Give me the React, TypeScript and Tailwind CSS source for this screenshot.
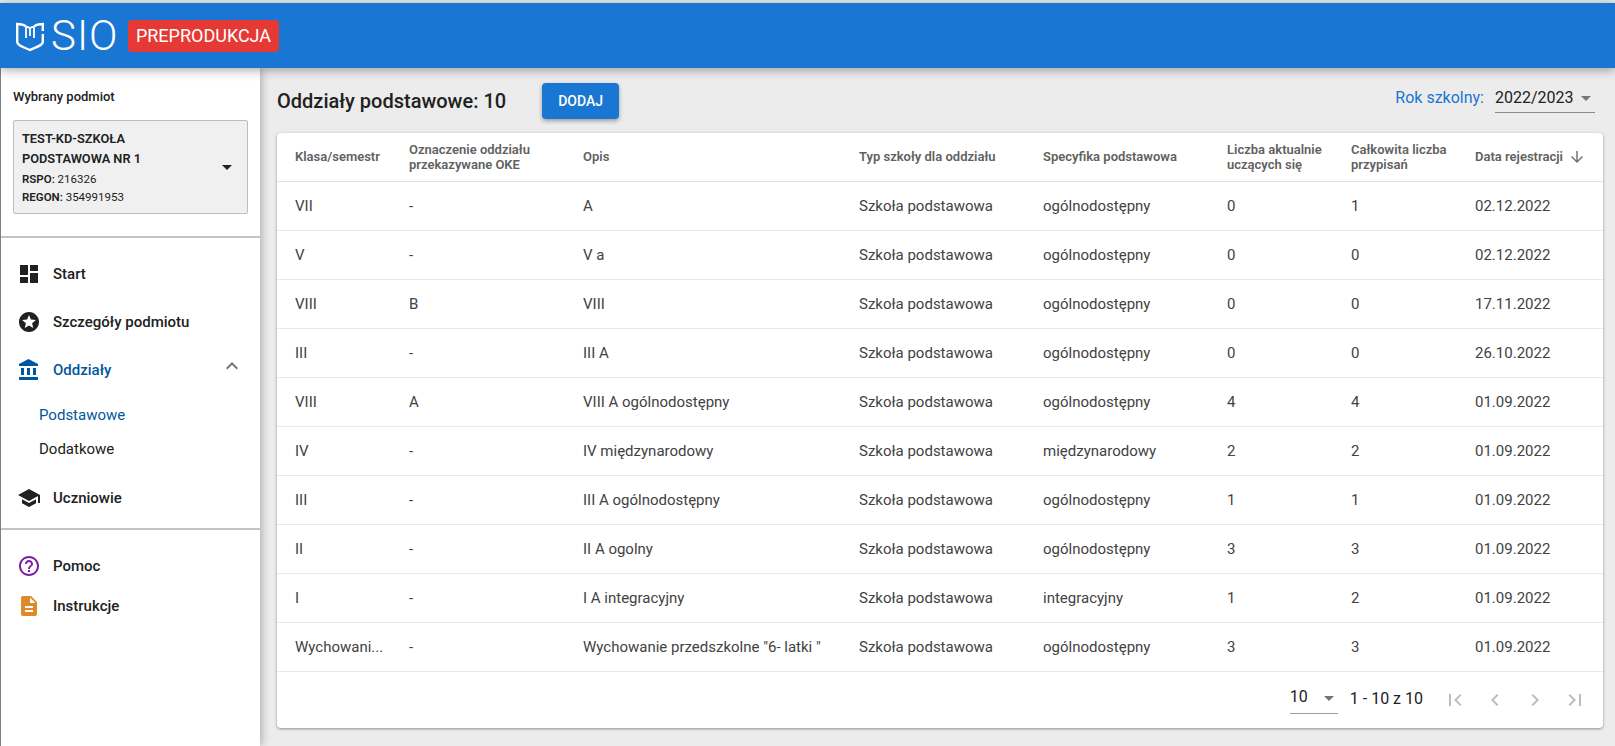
const FONT = 'font-["Roboto",sans-serif]';

const ICONS = {
  dashboard: 'M3 13h8V3H3v10zm0 8h8v-6H3v6zm10 0h8V11h-8v10zm0-18v6h8V3h-8z',
  stars: 'M11.99 2C6.47 2 2 6.48 2 12s4.47 10 9.99 10C17.52 22 22 17.52 22 12S17.52 2 11.99 2zm4.24 16L12 15.45 7.77 18l1.12-4.81-3.73-3.23 4.92-.42L12 5l1.92 4.53 4.92.42-3.73 3.23L16.23 18z',
  bank: 'M4 10v7h3v-7H4zm6 0v7h3v-7h-3zM2 22h19v-3H2v3zm14-12v7h3v-7h-3zm-4.5-9L2 6v2h19V6l-9.5-5z',
  school: 'M5 13.18v4L12 21l7-3.82v-4L12 17l-7-3.82zM12 3L1 9l11 6 9-4.91V17h2V9L12 3z',
  help: 'M11 18h2v-2h-2v2zm1-16C6.48 2 2 6.48 2 12s4.48 10 10 10 10-4.48 10-10S17.52 2 12 2zm0 18c-4.41 0-8-3.59-8-8s3.59-8 8-8 8 3.59 8 8-3.59 8-8 8zm0-14c-2.21 0-4 1.79-4 4h2c0-1.1.9-2 2-2s2 .9 2 2c0 2-3 1.75-3 5h2c0-2.25 3-2.5 3-5 0-2.21-1.79-4-4-4z',
  description: 'M14 2H6c-1.1 0-1.99.9-1.99 2L4 20c0 1.1.89 2 1.99 2H18c1.1 0 2-.9 2-2V8l-6-6zm2 16H8v-2h8v2zm0-4H8v-2h8v2zm-3-5V3.5L18.5 9H13z',
  first: 'M18.41 16.59L13.82 12l4.59-4.59L17 6l-6 6 6 6zM6 6h2v12H6z',
  prev: 'M15.41 7.41L14 6l-6 6 6 6 1.41-1.41L10.83 12z',
  next: 'M10 6L8.59 7.41 13.17 12l-4.58 4.59L10 18l6-6z',
  last: 'M5.59 7.41L10.18 12l-4.59 4.59L7 18l6-6-6-6zM16 6h2v12h-2z',
  less: 'M12 8l-6 6 1.41 1.41L12 10.83l4.59 4.58L18 14z',
  arrowDown: 'M20 12l-1.41-1.41L13 16.17V4h-2v12.17l-5.58-5.59L4 12l8 8 8-8z',
  dropDown: 'M7 10l5 5 5-5z',
};

function Icon({ name, className }: { name: keyof typeof ICONS; className: string }) {
  return (
    <svg viewBox="0 0 24 24" fill="currentColor" className={className}>
      <path d={ICONS[name]} />
    </svg>
  );
}

const rows = [
  ['VII', '-', 'A', 'Szkoła podstawowa', 'ogólnodostępny', '0', '1', '02.12.2022'],
  ['V', '-', 'V a', 'Szkoła podstawowa', 'ogólnodostępny', '0', '0', '02.12.2022'],
  ['VIII', 'B', 'VIII', 'Szkoła podstawowa', 'ogólnodostępny', '0', '0', '17.11.2022'],
  ['III', '-', 'III A', 'Szkoła podstawowa', 'ogólnodostępny', '0', '0', '26.10.2022'],
  ['VIII', 'A', 'VIII A ogólnodostępny', 'Szkoła podstawowa', 'ogólnodostępny', '4', '4', '01.09.2022'],
  ['IV', '-', 'IV międzynarodowy', 'Szkoła podstawowa', 'międzynarodowy', '2', '2', '01.09.2022'],
  ['III', '-', 'III A ogólnodostępny', 'Szkoła podstawowa', 'ogólnodostępny', '1', '1', '01.09.2022'],
  ['II', '-', 'II A ogolny', 'Szkoła podstawowa', 'ogólnodostępny', '3', '3', '01.09.2022'],
  ['I', '-', 'I A integracyjny', 'Szkoła podstawowa', 'integracyjny', '1', '2', '01.09.2022'],
  ['Wychowani...', '-', 'Wychowanie przedszkolne "6- latki "', 'Szkoła podstawowa', 'ogólnodostępny', '3', '3', '01.09.2022'],
];

function Logo() {
  return (
    <svg viewBox="0 0 28 30" fill="none" stroke="white" strokeWidth="2.4" className="w-[28px] h-[30px] shrink-0">
      <path d="M1.2 3 V21 C1.2 24.5 7.5 26 13.8 29 C20 26 26.8 24.5 26.8 21 V13" />
      <path d="M0 3 C4 3 8 3.2 10 5.5 M18 5.5 C20 3.2 24 3 28 3 M26.8 3 V10" />
      <path d="M10 17 V6.5 C11.5 5.5 13.4 6 14 8 C14.6 6 16.5 5.5 18 6.5 V17 M14 8 V15" strokeWidth="1.8" />
    </svg>
  );
}

function NavItem({ icon, label, iconClass, labelClass }: { icon: keyof typeof ICONS; label: string; iconClass: string; labelClass: string }) {
  return (
    <div className="flex items-center pl-[16px] h-[24px]">
      <Icon name={icon} className={'w-6 h-6 shrink-0 ' + iconClass} />
      <span className={'ml-[12px] text-[15px] font-medium ' + labelClass}>{label}</span>
    </div>
  );
}

export default function App() {
  return (
    <div className={'h-[746px] w-[1615px] overflow-hidden flex flex-col bg-[#ececec] ' + FONT}>
      <div className="h-[3px] bg-[#e6ece8] shrink-0" />
      <header className="relative z-20 h-[65px] shrink-0 bg-[#1976d2] flex items-center pl-4 shadow-[0_2px_10px_rgba(0,0,0,0.35)]">
        <Logo />
        <span className="ml-[7px] w-[77px] text-white text-[42px] font-light leading-none tracking-[1px]">SIO</span>
        <span className="w-[151px] h-[32px] justify-center rounded-[4px] bg-[#e53935] text-white text-[18px] flex items-center">PREPRODUKCJA</span>
      </header>

      <div className="flex flex-1 min-h-0">
        <aside className="relative z-10 w-[260px] shrink-0 bg-white border-l border-[#808080] shadow-[2px_0_8px_rgba(0,0,0,0.25)] flex flex-col">
          <div className="h-[170px] shrink-0 border-b-2 border-[#c4c4c4] px-[12px] pt-[21px]">
            <div className="text-[13px] font-medium text-[#212121] leading-[16px]">Wybrany podmiot</div>
            <div className="mt-[15px] h-[94px] border border-[#bdbdbd] rounded-[2px] bg-[#f0f0f0] pl-[8px] pr-[8px] flex items-center justify-between">
              <div className="text-[#212121]">
                <div className="text-[12.8px] font-semibold leading-[20px]">TEST-KD-SZKOŁA<br />PODSTAWOWA NR 1</div>
                <div className="text-[11.5px] leading-[20px]"><b className="font-semibold">RSPO:</b> 216326</div>
                <div className="text-[11.5px] leading-[16px]"><b className="font-semibold">REGON:</b> 354991953</div>
              </div>
              <Icon name="dropDown" className="w-6 h-6 text-[#212121]" />
            </div>
          </div>

          <nav className="h-[292px] shrink-0 border-b-2 border-[#c4c4c4] pt-[24px] flex flex-col">
            <NavItem icon="dashboard" label="Start" iconClass="text-[#212121]" labelClass="text-[#212121]" />
            <div className="h-[24px]" />
            <NavItem icon="stars" label="Szczegóły podmiotu" iconClass="text-[#212121]" labelClass="text-[#212121]" />
            <div className="h-[24px]" />
            <div className="relative">
              <NavItem icon="bank" label="Oddziały" iconClass="text-[#01579b]" labelClass="text-[#01579b]" />
              <Icon name="less" className="absolute right-[16px] -top-[4px] w-6 h-6 text-[#757575]" />
            </div>
            <div className="mt-[16px] pl-[38px] text-[15px] leading-[34px]">
              <div className="text-[#01579b]">Podstawowe</div>
              <div className="text-[#212121]">Dodatkowe</div>
            </div>
            <div className="h-[20px]" />
            <NavItem icon="school" label="Uczniowie" iconClass="text-[#212121]" labelClass="text-[#212121]" />
          </nav>

          <div className="pt-[24px] flex flex-col gap-[16px]">
            <NavItem icon="help" label="Pomoc" iconClass="text-[#7b1fa2]" labelClass="text-[#212121]" />
            <NavItem icon="description" label="Instrukcje" iconClass="text-[#dd8a2b]" labelClass="text-[#212121]" />
          </div>
        </aside>

        <main className="flex-1 min-w-0 pl-[17px] pr-[12px] flex flex-col">
          <div className="h-[65px] pt-[1px] shrink-0 flex items-center">
            <h1 className="text-[20px] font-medium text-[#212121] leading-none">Oddziały podstawowe: 10</h1>
            <button className="ml-[36px] h-[36px] w-[77px] rounded-[4px] bg-[#1976d2] text-white text-[14px] font-medium shadow-[0_2px_4px_rgba(0,0,0,0.35)]">DODAJ</button>
            <span className="ml-auto mb-[6px] text-[16px] text-[#1976d2]">Rok szkolny:</span>
            <div className="ml-[11px] mr-[8px] mb-[6px] w-[100px] h-[30px] border-b border-[#8a8a8a] flex items-center justify-between text-[16px] text-[#212121]">
              <span>2022/2023</span>
              <Icon name="dropDown" className="w-6 h-6 -mr-[3px] text-[#757575]" />
            </div>
          </div>

          <div className="h-[595px] shrink-0 bg-white rounded-[4px] shadow-[0_1px_3px_rgba(0,0,0,0.4)] flex flex-col">
            <table className="w-full table-fixed border-collapse text-[15px] text-[#424242]">
              <colgroup>
                <col className="w-[114px]" />
                <col className="w-[174px]" />
                <col className="w-[276px]" />
                <col className="w-[184px]" />
                <col className="w-[184px]" />
                <col className="w-[124px]" />
                <col className="w-[124px]" />
                <col className="w-[146px]" />
              </colgroup>
              <thead>
                <tr className="h-[48px] border-b border-[#e0e0e0] text-[13px] text-[#616161] leading-[15px] text-left">
                  <th className="pl-[18px] font-semibold">Klasa/semestr</th>
                  <th className="pl-[18px] font-semibold">Oznaczenie oddziału<br />przekazywane OKE</th>
                  <th className="pl-[18px] font-semibold">Opis</th>
                  <th className="pl-[18px] font-semibold">Typ szkoły dla oddziału</th>
                  <th className="pl-[18px] font-semibold">Specyfika podstawowa</th>
                  <th className="pl-[18px] font-semibold">Liczba aktualnie<br />uczących się</th>
                  <th className="pl-[18px] font-semibold">Całkowita liczba<br />przypisań</th>
                  <th className="pl-[18px] font-semibold">
                    <span className="flex items-center">Data rejestracji<Icon name="arrowDown" className="ml-[5px] w-[18px] h-[18px] text-[#757575]" /></span>
                  </th>
                </tr>
              </thead>
              <tbody>
                {rows.map((row, i) => (
                  <tr key={i} className="h-[49px] border-b border-[#e8e8e8]">
                    {row.map((cell, j) => (
                      <td key={j} className="pl-[18px] pt-[2px] truncate">{cell}</td>
                    ))}
                  </tr>
                ))}
              </tbody>
            </table>

            <div className="flex-1 flex items-center justify-end pr-[16px] text-[#212121]">
              <div className="relative w-[48px] h-[32px] mb-[4px] border-b border-[#9e9e9e] flex items-center text-[16px]">
                10
                <Icon name="dropDown" className="absolute -right-[3px] top-[4px] w-6 h-6 text-[#757575]" />
              </div>
              <span className="ml-[12px] mb-[2px] text-[16px]">1 - 10 z 10</span>
              <div className="ml-[20px] flex gap-[16px] text-[#bdbdbd]">
                <Icon name="first" className="w-6 h-6" />
                <Icon name="prev" className="w-6 h-6" />
                <Icon name="next" className="w-6 h-6" />
                <Icon name="last" className="w-6 h-6" />
              </div>
            </div>
          </div>
        </main>
      </div>
    </div>
  );
}
